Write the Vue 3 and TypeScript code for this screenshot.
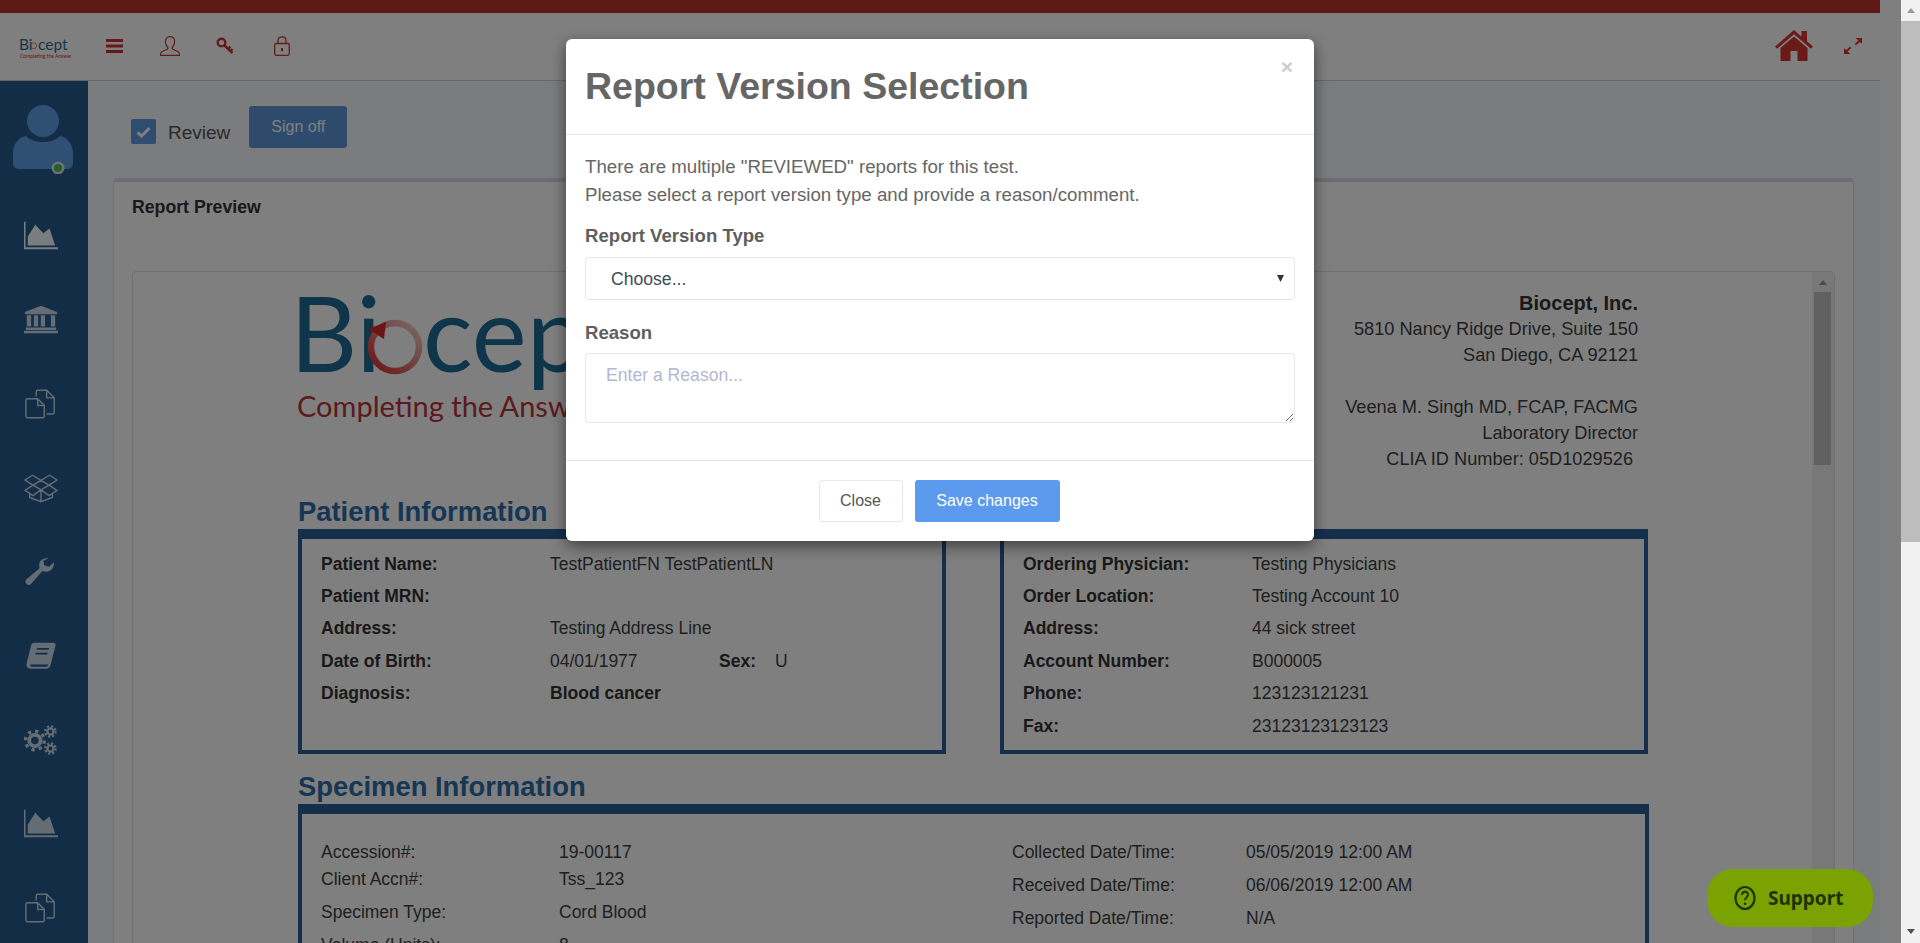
<template>
  <div class="page">
    <div class="app">
      <div class="topbar"></div>
      <header class="header">
        <svg class="mini-logo" width="52" height="26" viewBox="0 0 52 26">
          <text x="0" y="15" class="mini-word">Bi</text>
          <circle cx="14.600" cy="10.800" r="3" fill="none" stroke="#e0554f" stroke-width="0.800" />
          <text x="19" y="15" class="mini-word">cept</text>
          <text x="1" y="23" class="mini-tag">Completing the Answer</text>
        </svg>
        <div class="header-icons">
          <svg class="hamburger" viewBox="0 0 17 14"><path d="M0 0h17v3H0zM0 5.500h17v3H0zM0 11h17v3H0z" /></svg>
          <svg class="user-ico" viewBox="0 0 20 20"><path d="M10 .7c2.900 0 4.600 2.200 4.600 5 0 2-.9 4.100-2.100 5.300-.6.600-.5 1.700.3 2.200l5.400 2.600c.9.500 1.300 1.200 1.300 3.500H.5c0-2.300.4-3 1.300-3.500l5.400-2.600c.8-.5.900-1.600.3-2.200C6.300 9.800 5.400 7.700 5.400 5.700c0-2.800 1.700-5 4.600-5z" /></svg>
          <svg class="key-ico" viewBox="0 0 18 18"><circle cx="5.500" cy="5.500" r="3.800" /><path d="M8.500 8.500l8 7.500M12 11.800l2.300-2.300M14.500 14l2-2" /></svg>
          <svg class="lock-ico" viewBox="0 0 16 20"><rect x="0.700" y="7.500" width="14.600" height="11.800" rx="1.500" /><path d="M4 7.500V4.500C4 2.200 5.700.8 8 .8s4 1.400 4 3.700v3" /><path class="lock-hole" d="M7 12h2v3.200H7z" /></svg>
        </div>
        <svg class="home-ico" viewBox="0 0 38 31"><path d="M19 0L0 16.500l2 2.300L19 4.300l17 14.500 2-2.300-6-5.200V1h-5.500v5.700z" /><path d="M19 6.600L5.500 18v13h10V21h7v10h10V18z" /></svg>
        <svg class="expand-ico" viewBox="0 0 18 16"><path d="M11.500 0H18v5.800l-2.100-1.900-3.800 3.300-1.400-1.300 3.800-3.300zM0 16V10.200l2.100 1.900 3.800-3.300 1.400 1.300-3.800 3.300L6.500 16z" /></svg>
      </header>

      <div class="main">
        <aside class="sidebar">
          <svg class="avatar" width="60" height="72" viewBox="0 0 60 72">
            <circle cx="30" cy="19" r="16" />
            <path d="M13 34c4 4 10 6 17 6s13-2 17-6c7 1 13 8 13 17v10c0 4-3 6-6 6H7c-4 0-7-2-7-6V51c0-9 6-16 13-17z" />
            <circle class="dot-ring" cx="45" cy="66" r="6.500" />
            <circle class="dot" cx="45" cy="66" r="4" />
          </svg>
          <div class="nav">
            <svg class="nav-ico active" viewBox="0 0 36 30"><path d="M0 0h1.600v27H36v2H0z" /><path d="M4 25V15.500L12 3l8.500 9L27 7l6 18z" /></svg>
            <svg class="nav-ico" viewBox="0 0 36 30"><path d="M18 0l17 6.500V9H1V6.500zM3 10h4.500v12H3zM10.500 10H15v12h-4.500zM17.800 10h4.500v12h-4.500zM28.500 10H33v12h-4.500zM2 23h32v2.500H2zM0 26.500h36V29H0z" /></svg>
            <svg class="nav-ico line" viewBox="0 0 36 30"><path d="M2 11c0-1 .5-1.500 1.500-1.500h11l7 7V28c0 1-.5 1.500-1.500 1.500H3.500C2.500 29.500 2 29 2 28zM14.500 9.500v7h7" /><path d="M13 7V2c0-1 .5-1.500 1.500-1.500h9.500l8 8V24c0 1-.5 1.500-1.500 1.500H24M24 .5v8h8" /></svg>
            <svg class="nav-ico line" viewBox="0 0 36 30"><path d="M18 7L9 1.500 1 6.500l8.500 5.500zM18 7l9-5.500 8 5-8.500 5.500zM18 17l-8.500-5-8.500 5.500L9.500 23zM18 17l8.500-5 8.500 5.500L26.500 23zM6 20.500v4.500l12 4.500 12-4.500v-4.500M18 17.500v12" /></svg>
            <svg class="nav-ico" viewBox="0 0 36 30"><path d="M24 .5c-4.800 0-8 3.400-8 7.400 0 1.100.2 2 .6 2.900L2.500 23c-1.300 1.200-1.300 3.100 0 4.300l.6.600c1.300 1.200 3.100 1.100 4.300-.1L19.500 14c1.100.5 2.200.8 3.500.8 5.800 0 9.500-4.700 8.500-10l-5 4.600-5-1.500-1-4.500 5-3c-.2-.2-.3-.4-1.500-.4z" /></svg>
            <svg class="nav-ico" viewBox="0 0 36 30"><path d="M11 1h20c2 0 3 1.200 2.400 3L28 25c-.6 2-2 3.500-4.500 3.500H7C3.800 28.500 2 26 2.800 23L7.500 4c.5-2 1.700-3 3.500-3zm3 5.500l-.6 2H26l.6-2zm-1.500 5l-.6 2h12.600l.6-2zM6.600 24c-.3 1.300.3 2.300 1.700 2.300h15c1.200 0 2-.5 2.300-1.500l.2-.8z" /></svg>
            <svg class="nav-ico" viewBox="0 0 36 30">
              <g fill="none">
                <circle cx="11.500" cy="15.500" r="6" stroke-width="4" />
                <circle cx="11.500" cy="15.500" r="10" stroke-width="3.500" stroke-dasharray="3.500 4.350" />
                <circle cx="28" cy="6" r="3.200" stroke-width="2.400" />
                <circle cx="28" cy="6" r="5.500" stroke-width="2.400" stroke-dasharray="2.200 2.120" />
                <circle cx="28" cy="24" r="3.200" stroke-width="2.400" />
                <circle cx="28" cy="24" r="5.500" stroke-width="2.400" stroke-dasharray="2.200 2.120" />
              </g>
            </svg>
            <svg class="nav-ico" viewBox="0 0 36 30"><path d="M0 0h1.600v27H36v2H0z" /><path d="M4 25V15.500L12 3l8.500 9L27 7l6 18z" /></svg>
            <svg class="nav-ico line" viewBox="0 0 36 30"><path d="M2 11c0-1 .5-1.500 1.500-1.500h11l7 7V28c0 1-.5 1.500-1.500 1.500H3.500C2.500 29.500 2 29 2 28zM14.500 9.500v7h7" /><path d="M13 7V2c0-1 .5-1.500 1.500-1.500h9.500l8 8V24c0 1-.5 1.500-1.500 1.500H24M24 .5v8h8" /></svg>
          </div>
        </aside>

        <section class="content">
          <div class="toolbar">
            <span class="check">
              <svg width="15" height="12" viewBox="0 0 15 12"><path d="M1.500 6.500l4 3.500 8-8" fill="none" stroke="#fff" stroke-width="3" /></svg>
            </span>
            <span class="review">Review</span>
            <button class="signoff" type="button">Sign off</button>
          </div>

          <div class="card">
            <div class="card-title">Report Preview</div>
            <div class="viewer">
              <div class="report">
                <div class="report-head">
                  <svg class="logo" width="500" height="170" viewBox="0 0 500 170">
                    <text x="0" y="100" class="logo-word">Bi</text>
                    <circle cx="105" cy="75" r="24" fill="none" stroke="url(#ringFade)" stroke-width="6.500" />
                    <path d="M78 57l18-7-2 17z" fill="#d8282c" />
                    <text x="133" y="100" class="logo-word">cept</text>
                    <text x="7" y="145" class="logo-tag">Completing the Answer</text>
                    <defs>
                      <linearGradient id="ringFade" x1="0" y1="1" x2="1" y2="0">
                        <stop offset="0" stop-color="#d8282c" />
                        <stop offset="1" stop-color="#f0d6d0" />
                      </linearGradient>
                    </defs>
                  </svg>
                  <address class="company">
                    <strong>Biocept, Inc.</strong>
                    <span>5810 Nancy Ridge Drive, Suite 150</span>
                    <span>San Diego, CA 92121</span>
                    <span class="blank"></span>
                    <span>Veena M. Singh MD, FCAP, FACMG</span>
                    <span>Laboratory Director</span>
                    <span class="clia">CLIA ID Number: 05D1029526</span>
                  </address>
                </div>

                <div class="info-grid">
                  <h2>Patient Information</h2>
                  <div></div>
                  <div class="box">
                    <div v-for="row in patient" :key="row.label" class="info-row">
                      <b class="info-label">{{ row.label }}</b>
                      <b v-if="row.strong">{{ row.value }}</b>
                      <span v-else class="dob">{{ row.value }}</span>
                      <template v-if="row.sex">
                        <b class="sex">Sex:</b>
                        <span>{{ row.sex }}</span>
                      </template>
                    </div>
                  </div>
                  <div class="box">
                    <div v-for="row in physician" :key="row.label" class="info-row">
                      <b class="info-label">{{ row.label }}</b>
                      <span>{{ row.value }}</span>
                    </div>
                  </div>
                </div>

                <h2 class="spec-title">Specimen Information</h2>
                <div class="box spec-box">
                  <div class="spec-left">
                    <div v-for="row in specimenLeft" :key="row.label" class="spec-row">
                      <span class="spec-label">{{ row.label }}</span>
                      <span>{{ row.value }}</span>
                    </div>
                  </div>
                  <div class="spec-right">
                    <div v-for="row in specimenRight" :key="row.label" class="spec-row">
                      <span class="spec-label">{{ row.label }}</span>
                      <span>{{ row.value }}</span>
                    </div>
                  </div>
                </div>
              </div>
              <div class="viewer-scroll">
                <span class="arrow-up"></span>
                <span class="viewer-thumb"></span>
              </div>
            </div>
          </div>
        </section>
      </div>
    </div>

    <div class="gutter"></div>
    <div class="page-scroll">
      <span class="arrow-up light"></span>
      <span class="page-thumb"></span>
      <span class="arrow-down"></span>
    </div>

    <div class="backdrop">
      <div class="modal" role="dialog" aria-label="Report Version Selection">
        <div class="modal-header">
          <h1>Report Version Selection</h1>
          <button class="close" type="button" aria-label="Close">×</button>
        </div>
        <div class="modal-body">
          <p>There are multiple "REVIEWED" reports for this test.<br />Please select a report version type and provide a reason/comment.</p>
          <label class="field-label" for="version">Report Version Type</label>
          <select id="version" class="field-select">
            <option>Choose...</option>
          </select>
          <label class="field-label reason" for="reason">Reason</label>
          <textarea id="reason" class="field-text" placeholder="Enter a Reason..."></textarea>
        </div>
        <div class="modal-footer">
          <button class="btn-close" type="button">Close</button>
          <button class="btn-save" type="button">Save changes</button>
        </div>
      </div>
    </div>

    <button class="support" type="button">
      <svg width="22" height="26" viewBox="0 0 22 26">
        <ellipse cx="11" cy="13" rx="9.500" ry="11" fill="none" stroke="#1d3300" stroke-width="2.200" />
        <path d="M8 10c0-2 1.300-3.300 3-3.300s3 1.200 3 3c0 2.800-3 2.800-3 5.600" fill="none" stroke="#1d3300" stroke-width="1.900" />
        <circle cx="11" cy="18.800" r="1.300" fill="#1d3300" />
      </svg>
      Support
    </button>
  </div>
</template>

<script setup lang="ts">
interface InfoRow {
  label: string
  value: string
  strong?: boolean
  sex?: string
}

const patient: InfoRow[] = [
  { label: 'Patient Name:', value: 'TestPatientFN TestPatientLN' },
  { label: 'Patient MRN:', value: '' },
  { label: 'Address:', value: 'Testing Address Line' },
  { label: 'Date of Birth:', value: '04/01/1977', sex: 'U' },
  { label: 'Diagnosis:', value: 'Blood cancer', strong: true },
]

const physician: InfoRow[] = [
  { label: 'Ordering Physician:', value: 'Testing Physicians' },
  { label: 'Order Location:', value: 'Testing Account 10' },
  { label: 'Address:', value: '44 sick street' },
  { label: 'Account Number:', value: 'B000005' },
  { label: 'Phone:', value: '123123121231' },
  { label: 'Fax:', value: '23123123123123' },
]

const specimenLeft: InfoRow[] = [
  { label: 'Accession#:', value: '19-00117' },
  { label: 'Client Accn#:', value: 'Tss_123' },
  { label: 'Specimen Type:', value: 'Cord Blood' },
  { label: 'Volume (Units):', value: '8' },
]

const specimenRight: InfoRow[] = [
  { label: 'Collected Date/Time:', value: '05/05/2019 12:00 AM' },
  { label: 'Received Date/Time:', value: '06/06/2019 12:00 AM' },
  { label: 'Reported Date/Time:', value: 'N/A' },
]
</script>

<style>
html,
body {
  margin: 0;
  height: 100%;
  overflow: hidden;
}
</style>

<style scoped>
.page {
  position: relative;
  display: flex;
  height: 943px;
  overflow: hidden;
  background: #fff;
  font-family: "Liberation Sans", Arial, sans-serif;
  color: #444;
}

.app {
  width: 1880px;
  flex: none;
  display: flex;
  flex-direction: column;
}

.gutter {
  width: 21px;
  flex: none;
  background: #fff;
}

/* page scrollbar stays above the dimmed layer */
.page-scroll {
  position: relative;
  z-index: 20;
  width: 19px;
  flex: none;
  display: flex;
  flex-direction: column;
  align-items: stretch;
  background: #f1f1f1;
}

.page-thumb {
  position: absolute;
  top: 21px;
  left: 0;
  right: 0;
  height: 521px;
  background: #bdbdbd;
}

.arrow-up,
.arrow-down {
  display: block;
  width: 0;
  height: 0;
  border-left: 4px solid transparent;
  border-right: 4px solid transparent;
}

.arrow-up {
  border-bottom: 5px solid #9a9a9a;
  margin: 8px auto 0;
}

.arrow-down {
  border-top: 5px solid #505050;
  position: absolute;
  bottom: 9px;
  left: 6px;
}

.topbar {
  height: 13px;
  background: #be3430;
}

.header {
  height: 67px;
  flex: none;
  display: flex;
  align-items: center;
  border-bottom: 1px solid #c9cdd2;
  background: #fff;
}

.mini-logo {
  margin-left: 19px;
  margin-top: 3px;
}

.mini-word {
  font-family: "Lato", "Liberation Sans", sans-serif;
  font-size: 15.500px;
  fill: #2a6f98;
}

.mini-tag {
  font-family: "Lato", "Liberation Sans", sans-serif;
  font-size: 5px;
  fill: #c8323a;
}

.header-icons {
  margin-left: 35px;
  display: flex;
  align-items: center;
  margin-top: -2px;
}

.hamburger {
  width: 17px;
  height: 14px;
  fill: #c93431;
}

.user-ico {
  width: 20px;
  height: 20px;
  margin-left: 37px;
  fill: none;
  stroke: #c93431;
  stroke-width: 1.200;
}

.key-ico {
  width: 18px;
  height: 18px;
  margin-left: 36px;
  fill: none;
  stroke: #c93431;
  stroke-width: 2.400;
}

.lock-ico {
  width: 16px;
  height: 20px;
  margin-left: 40px;
  fill: none;
  stroke: #c93431;
  stroke-width: 1.300;
}

.lock-hole {
  fill: #c93431;
  stroke: none;
}

.home-ico {
  width: 38px;
  height: 31px;
  margin-left: auto;
  margin-top: -2px;
  fill: #d63530;
}

.expand-ico {
  width: 18px;
  height: 16px;
  margin-left: 31px;
  margin-right: 18px;
  margin-top: -2px;
  fill: #d63530;
}

.main {
  flex: 1;
  min-height: 0;
  display: flex;
}

.sidebar {
  width: 88px;
  flex: none;
  background: #285a8e;
}

.avatar {
  display: block;
  margin: 21px 0 0 13px;
  fill: #5fa0e6;
}

.dot-ring {
  fill: #dfe6df;
}

.dot {
  fill: #44c35a;
}

.nav {
  margin-top: 47px;
  padding-right: 7px;
  display: flex;
  flex-direction: column;
  align-items: center;
  gap: 54px;
}

.nav-ico {
  width: 34px;
  height: 30px;
  flex: none;
  fill: #c6dbe6;
  stroke: #c6dbe6;
  stroke-width: 0;
}

.nav-ico g {
  stroke: #c6dbe6;
}

.nav-ico.line {
  fill: none;
  stroke-width: 1.500;
}

.nav-ico.active {
  fill: #f2fbff;
}

.content {
  flex: 1;
  min-width: 0;
  padding: 25px 26px 0 25px;
  background: #f6f8fb;
}

.toolbar {
  height: 42px;
  padding-left: 18px;
  display: flex;
  align-items: flex-start;
}

.check {
  width: 25px;
  height: 25px;
  margin-top: 13px;
  border-radius: 2px;
  background: #5f9be0;
  display: flex;
  align-items: center;
  justify-content: center;
}

.review {
  margin: 15px 0 0 12px;
  font-size: 19px;
  line-height: 24px;
  color: #555;
}

.signoff {
  width: 98px;
  height: 42px;
  margin-left: 19px;
  padding: 0;
  border: 0;
  border-radius: 3px;
  background: #5d97dd;
  color: #fff;
  font: 16px "Liberation Sans", Arial, sans-serif;
}

.card {
  margin-top: 30px;
  height: 800px;
  padding: 0 18px;
  background: #fff;
  border: 1px solid #dfe3e8;
  border-top: 4px solid #d3dee8;
  border-radius: 4px;
}

.card-title {
  height: 89px;
  padding-top: 15px;
  box-sizing: border-box;
  font-size: 17.700px;
  line-height: 20px;
  font-weight: 700;
  color: #333;
}

.viewer {
  display: flex;
  height: 700px;
  border: 1px solid #dde2e6;
  border-radius: 4px;
  overflow: hidden;
}

.report {
  flex: 1;
  min-width: 0;
  padding: 0 163px 0 165px;
  font-size: 17.500px;
  color: #3f3f3f;
}

.viewer-scroll {
  position: relative;
  width: 22px;
  flex: none;
  background: #f1f1f1;
}

.viewer-thumb {
  position: absolute;
  top: 20px;
  left: 2px;
  right: 3px;
  height: 173px;
  background: #c0c0c0;
}

.report-head {
  height: 223px;
  display: flex;
  justify-content: space-between;
}

.logo {
  flex: none;
  display: block;
  margin-left: -8px;
}

.logo-word {
  font-family: "Lato", "Liberation Sans", sans-serif;
  font-size: 104px;
  fill: #1f6a94;
}

.logo-tag {
  font-family: "Lato", "Liberation Sans", sans-serif;
  font-size: 29px;
  fill: #b8343a;
}

.company {
  padding: 18px 11px 0 0;
  display: flex;
  flex-direction: column;
  align-items: flex-end;
  font-size: 18.200px;
  font-style: normal;
  line-height: 26px;
}

.company strong {
  font-size: 20px;
  color: #333;
}

.blank {
  height: 26px;
}

.clia {
  padding-right: 5px;
}

.info-grid {
  display: grid;
  grid-template-columns: 648px 648px;
  column-gap: 54px;
}

h2 {
  margin: 0;
  font-size: 27.400px;
  line-height: 34px;
  font-weight: 700;
  color: #2e6ca8;
}

.box {
  box-sizing: border-box;
  border: 4px solid #2a5c94;
  border-top-width: 10px;
}

.info-grid .box {
  height: 225px;
  padding: 9px 0 0 19px;
}

.info-row {
  display: flex;
  height: 32.400px;
  align-items: center;
  white-space: nowrap;
}

.info-row b {
  color: #333;
}

.info-label {
  width: 229px;
  flex: none;
}

.dob {
  min-width: 169px;
}

.sex {
  width: 56px;
}

.spec-title {
  margin-top: 16px;
}

.spec-box {
  display: flex;
  height: 500px;
  padding: 28px 0 0 19px;
  line-height: 20px;
}

.spec-left {
  width: 691px;
  flex: none;
}

.spec-row {
  display: flex;
  margin-bottom: 13px;
}

.spec-left .spec-row:first-child {
  margin-bottom: 7px;
}

.spec-left .spec-label {
  width: 238px;
}

.spec-right .spec-label {
  width: 234px;
}

/* dimmed layer over the page */
.backdrop {
  position: absolute;
  z-index: 10;
  left: 0;
  top: 0;
  bottom: 0;
  width: 1901px;
  padding: 39px 21px 0 0;
  box-sizing: border-box;
  display: flex;
  justify-content: center;
  align-items: flex-start;
  background: rgba(0, 0, 0, 0.5);
}

.modal {
  width: 748px;
  height: 502px;
  display: flex;
  flex-direction: column;
  background: #fff;
  border-radius: 6px;
  box-shadow: 0 5px 15px rgba(0, 0, 0, 0.5);
}

.modal-header {
  position: relative;
  height: 96px;
  flex: none;
  box-sizing: border-box;
  padding: 0 19px;
  border-bottom: 1px solid #e5e5e5;
}

h1 {
  margin: 0;
  padding-top: 24px;
  font-size: 37.500px;
  line-height: 46px;
  font-weight: 700;
  color: #666;
}

.close {
  position: absolute;
  top: 15px;
  right: 21px;
  padding: 0;
  border: 0;
  background: none;
  font: 700 21px/26px "Liberation Sans", Arial, sans-serif;
  color: #ccc;
}

.modal-body {
  height: 325px;
  flex: none;
  box-sizing: border-box;
  padding: 18px 19px 0;
}

p {
  margin: 0;
  font-size: 18.700px;
  line-height: 28px;
  color: #666;
}

.field-label {
  display: block;
  margin-top: 15px;
  font-size: 18.600px;
  line-height: 24px;
  font-weight: 700;
  color: #5f5f5f;
}

.field-label.reason {
  margin-top: 21px;
}

.field-select {
  display: block;
  width: 710px;
  height: 43px;
  margin-top: 9px;
  padding: 0 0 0 25px;
  box-sizing: border-box;
  appearance: none;
  border: 1px solid #e4e7ea;
  border-radius: 4px;
  background: #fff url("data:image/svg+xml;utf8,<svg xmlns='http://www.w3.org/2000/svg' width='7' height='7'><path d='M0 0h7L3.500 7z' fill='%23333'/></svg>") no-repeat right 10px center;
  font: 17.600px "Liberation Sans", Arial, sans-serif;
  color: #3e4b5b;
}

.field-text {
  display: block;
  width: 710px;
  height: 70px;
  margin-top: 8px;
  padding: 10px 20px;
  box-sizing: border-box;
  border: 1px solid #e4e7ea;
  border-radius: 4px;
  font: 17.600px/22px "Liberation Sans", Arial, sans-serif;
  outline: none;
}

.field-text::placeholder {
  color: #b4b7cf;
}

.modal-footer {
  flex: 1;
  display: flex;
  justify-content: center;
  gap: 12px;
  padding: 19px 2px 0 0;
  border-top: 1px solid #e5e5e5;
}

.modal-footer button {
  height: 42px;
  border-radius: 3px;
  padding: 0;
  font: 16px "Liberation Sans", Arial, sans-serif;
}

.btn-close {
  width: 84px;
  border: 1px solid #e8e8e8;
  background: #fff;
  color: #555;
}

.btn-save {
  width: 145px;
  border: 0;
  background: #5c9aee;
  color: #fff;
}

.support {
  position: absolute;
  z-index: 30;
  left: 1707px;
  top: 869px;
  width: 166px;
  height: 58px;
  padding: 0 0 0 27px;
  display: flex;
  align-items: center;
  gap: 12px;
  border: 0;
  border-radius: 26px;
  background: #7aa200;
  color: #1d3300;
  font: 700 19px "Noto Sans", "Open Sans", sans-serif;
}
</style>
